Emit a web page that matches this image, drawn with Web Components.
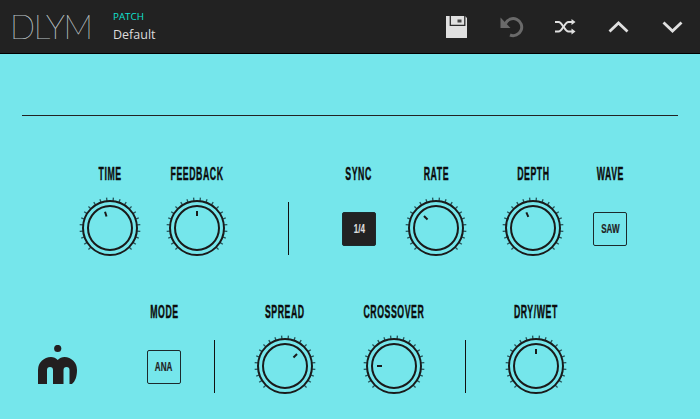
<!DOCTYPE html>
<html>
<head>
<meta charset="utf-8">
<style>
  html, body { margin: 0; padding: 0; }
  body { width: 700px; height: 419px; overflow: hidden; background: #75e6eb; }
</style>
</head>
<body>
<dlym-app></dlym-app>

<script>
const LABEL_FONT = `"Liberation Sans", sans-serif`;

class DlymIconButton extends HTMLElement {
  constructor() {
    super();
    this.attachShadow({ mode: "open" });
  }
  connectedCallback() {
    this.shadowRoot.innerHTML = `
    <style>
      :host { display: block; width: 26px; height: 26px; }
      svg { display: block; width: 26px; height: 26px; }
    </style>
    <svg viewBox="0 0 26 26">${this.icon()}</svg>`;
  }
  icon() {
    const icons = {
      save: `<path fill="#e0e0e0" d="M2 2h19l2 2v19.500a.5.5 0 0 1-.5.5h-20a.5.5 0 0 1-.5-.5z"/>
             <path fill="none" stroke="#2a2a2a" stroke-width="1.300" d="M6.300 2v9.300h14.500v-9.300"/>
             <path fill="#444" d="M13.500 5.500h4v3h-4z"/>`,
      undo: `<path fill="none" stroke="#6a6a6a" stroke-width="3" d="M7.500 9.500a8.500 8.500 0 1 1 4.500 11.500"/>
             <path fill="#6a6a6a" d="M2.500 3.500v10.500h10z"/>`,
      shuffle: `<g fill="none" stroke="#e0e0e0" stroke-width="2">
                <path d="M3 8h3.500c4 0 6 9.500 10 9.500h3.500"/>
                <path d="M3 17.500h3.500c4 0 6-9.500 10-9.500h3.500"/></g>
                <path fill="#e0e0e0" d="M19.500 5l4 3-4 3zM19.500 14.500l4 3-4 3z"/>`,
      up: `<path fill="none" stroke="#e0e0e0" stroke-width="2.800" d="M3.500 17.500l9-8.500 9 8.500"/>`,
      down: `<path fill="none" stroke="#e0e0e0" stroke-width="2.800" d="M3.500 8.500l9 8.500 9-8.500"/>`,
    };
    return icons[this.getAttribute("icon")];
  }
}
customElements.define("dlym-icon-button", DlymIconButton);

class DlymHeader extends HTMLElement {
  constructor() {
    super();
    this.attachShadow({ mode: "open" });
  }
  connectedCallback() {
    this.shadowRoot.innerHTML = `
    <style>
      :host {
        display: flex;
        align-items: center;
        height: 53px;
        background: #222222;
        border-bottom: 1px solid #000;
        padding-left: 10px;
      }
      .logo {
        font: 100 33px/1 Lato, sans-serif;
        color: #e4ecef;
        -webkit-text-stroke: .2px #c4d0d4;
        width: 103px;
        letter-spacing: -1.300px;
      }
      .patch { display: flex; flex-direction: column; gap: 4px; }
      .patch small { font: 400 9.800px/12px "Open Sans", sans-serif; color: #10e2d2; }
      .patch span { font: 400 12.500px/16px "Open Sans", sans-serif; color: #dcdcdc; }
      .tools { display: flex; margin: 1px 0 0 auto; padding-right: 14px; gap: 28px; align-items: center; }
    </style>
    <div class="logo">DLYM</div>
    <div class="patch"><small>PATCH</small><span>Default</span></div>
    <div class="tools"><slot></slot></div>`;
  }
}
customElements.define("dlym-header", DlymHeader);

class DlymKnob extends HTMLElement {
  constructor() {
    super();
    this.attachShadow({ mode: "open" });
  }
  connectedCallback() {
    const angle = Number(this.getAttribute("angle") || 0);
    let ticks = "";
    for (let i = 0; i < 22; i++) {
      const a = -135 + i * 270 / 21;
      ticks += `<line x1="32" y1="5" x2="32" y2="1.500" transform="rotate(${a} 32 32)"/>`;
    }
    this.shadowRoot.innerHTML = `
    <style>
      :host { display: block; width: 64px; height: 64px; }
      svg { display: block; }
    </style>
    <svg width="64" height="64" viewBox="0 0 64 64" fill="none" stroke="#1a1a1a">
      <g stroke-width="1.300" stroke="#24545a">${ticks}</g>
      <circle cx="32" cy="32" r="27" stroke-width="2"/>
      <circle cx="32" cy="32" r="22" stroke-width="2"/>
      <line x1="32" y1="20" x2="32" y2="15" stroke-width="2" transform="rotate(${angle} 32 32)"/>
    </svg>`;
  }
}
customElements.define("dlym-knob", DlymKnob);

class DlymToggle extends HTMLElement {
  constructor() {
    super();
    this.attachShadow({ mode: "open" });
  }
  connectedCallback() {
    this.shadowRoot.innerHTML = `
    <style>
      :host {
        display: flex;
        align-items: center;
        justify-content: center;
        width: 34px;
        height: 34px;
        margin-top: 2px;
        box-sizing: border-box;
        border: 1px solid #1c2a2c;
        border-radius: 2px;
        color: #222;
        font: 700 13.500px/1 ${LABEL_FONT};
        -webkit-text-stroke: .2px currentColor;
      }
      :host([on]) { background: #222; color: #ddd; }
      span { display: block; transform: scaleX(.6); }
    </style>
    <span><slot></slot></span>`;
  }
}
customElements.define("dlym-toggle", DlymToggle);

class DlymControl extends HTMLElement {
  constructor() {
    super();
    this.attachShadow({ mode: "open" });
  }
  connectedCallback() {
    this.shadowRoot.innerHTML = `
    <style>
      :host {
        display: grid;
        grid-template-columns: 64px;
        grid-template-rows: 16px 64px;
        row-gap: 14px;
        justify-items: center;
        align-items: center;
        width: 64px;
      }
      .label {
        font: 700 17.500px/16px ${LABEL_FONT};
        color: #0c0c0c;
        white-space: nowrap;
        letter-spacing: 1.100px;
        transform: scaleX(.5);
        -webkit-text-stroke: .4px currentColor;
      }
    </style>
    <div class="label">${this.getAttribute("label")}</div>
    <slot></slot>`;
  }
}
customElements.define("dlym-control", DlymControl);

class DlymDivider extends HTMLElement {
  constructor() {
    super();
    this.attachShadow({ mode: "open" });
  }
  connectedCallback() {
    this.shadowRoot.innerHTML = `
    <style>
      :host { display: block; width: 1px; height: 53px; background: #111; align-self: flex-end; }
    </style>`;
  }
}
customElements.define("dlym-divider", DlymDivider);

class DlymBrand extends HTMLElement {
  constructor() {
    super();
    this.attachShadow({ mode: "open" });
  }
  connectedCallback() {
    this.shadowRoot.innerHTML = `
    <style>
      :host { display: block; width: 40px; height: 40px; align-self: flex-end; }
      svg { display: block; }
    </style>
    <svg width="40" height="40" viewBox="0 0 40 40" fill="#231f20">
      <circle cx="19.700" cy="3.500" r="3.600"/>
      <path d="M0 39V25A13 13 0 0 1 13 12C15.500 12 18 13 19.700 15C21.500 13 24 12 26.500 12A12.500 13 0 0 1 39 25C39 31 37.500 36 34 39H31.500V25A3 3 0 0 0 25.500 25V39H15V25A3 3 0 0 0 9 25V39Z"/>
    </svg>`;
  }
}
customElements.define("dlym-brand", DlymBrand);

class DlymApp extends HTMLElement {
  constructor() {
    super();
    this.attachShadow({ mode: "open" });
  }
  connectedCallback() {
    this.shadowRoot.innerHTML = `
    <style>
      :host { display: block; }
      main { padding: 61px 22px 0; }
      hr { margin: 0; border: 0; height: 1px; background: #222; }
      .row { display: flex; align-items: flex-end; margin-left: -22px; }
      .row1 { margin-top: 50px; padding-left: 78px; height: 94px; }
      .row2 { margin-top: 44px; padding-left: 38px; height: 94px; }
    </style>
    <dlym-header>
      <dlym-icon-button icon="save"></dlym-icon-button>
      <dlym-icon-button icon="undo"></dlym-icon-button>
      <dlym-icon-button icon="shuffle"></dlym-icon-button>
      <dlym-icon-button icon="up"></dlym-icon-button>
      <dlym-icon-button icon="down"></dlym-icon-button>
    </dlym-header>
    <main>
      <hr>
      <div class="row row1">
        <dlym-control label="TIME"><dlym-knob angle="-17"></dlym-knob></dlym-control>
        <dlym-control label="FEEDBACK" style="margin-left:23px"><dlym-knob angle="0"></dlym-knob></dlym-control>
        <dlym-divider style="margin-left:59px;margin-bottom:5px"></dlym-divider>
        <dlym-control label="SYNC" style="margin-left:38px"><dlym-toggle on>1/4</dlym-toggle></dlym-control>
        <dlym-control label="RATE" style="margin-left:13px"><dlym-knob angle="-45"></dlym-knob></dlym-control>
        <dlym-control label="DEPTH" style="margin-left:33px"><dlym-knob angle="-23"></dlym-knob></dlym-control>
        <dlym-control label="WAVE" style="margin-left:13px"><dlym-toggle>SAW</dlym-toggle></dlym-control>
      </div>
      <div class="row row2">
        <dlym-brand style="margin-bottom:13px"></dlym-brand>
        <dlym-control label="MODE" style="margin-left:54px"><dlym-toggle>ANA</dlym-toggle></dlym-control>
        <dlym-divider style="margin-left:18px;margin-bottom:5px"></dlym-divider>
        <dlym-control label="SPREAD" style="margin-left:38px"><dlym-knob angle="45"></dlym-knob></dlym-control>
        <dlym-control label="CROSSOVER" style="margin-left:45px"><dlym-knob angle="-90"></dlym-knob></dlym-control>
        <dlym-divider style="margin-left:39px;margin-bottom:5px"></dlym-divider>
        <dlym-control label="DRY/WET" style="margin-left:38px"><dlym-knob angle="0"></dlym-knob></dlym-control>
      </div>
    </main>`;
  }
}
customElements.define("dlym-app", DlymApp);
</script>
</body>
</html>
